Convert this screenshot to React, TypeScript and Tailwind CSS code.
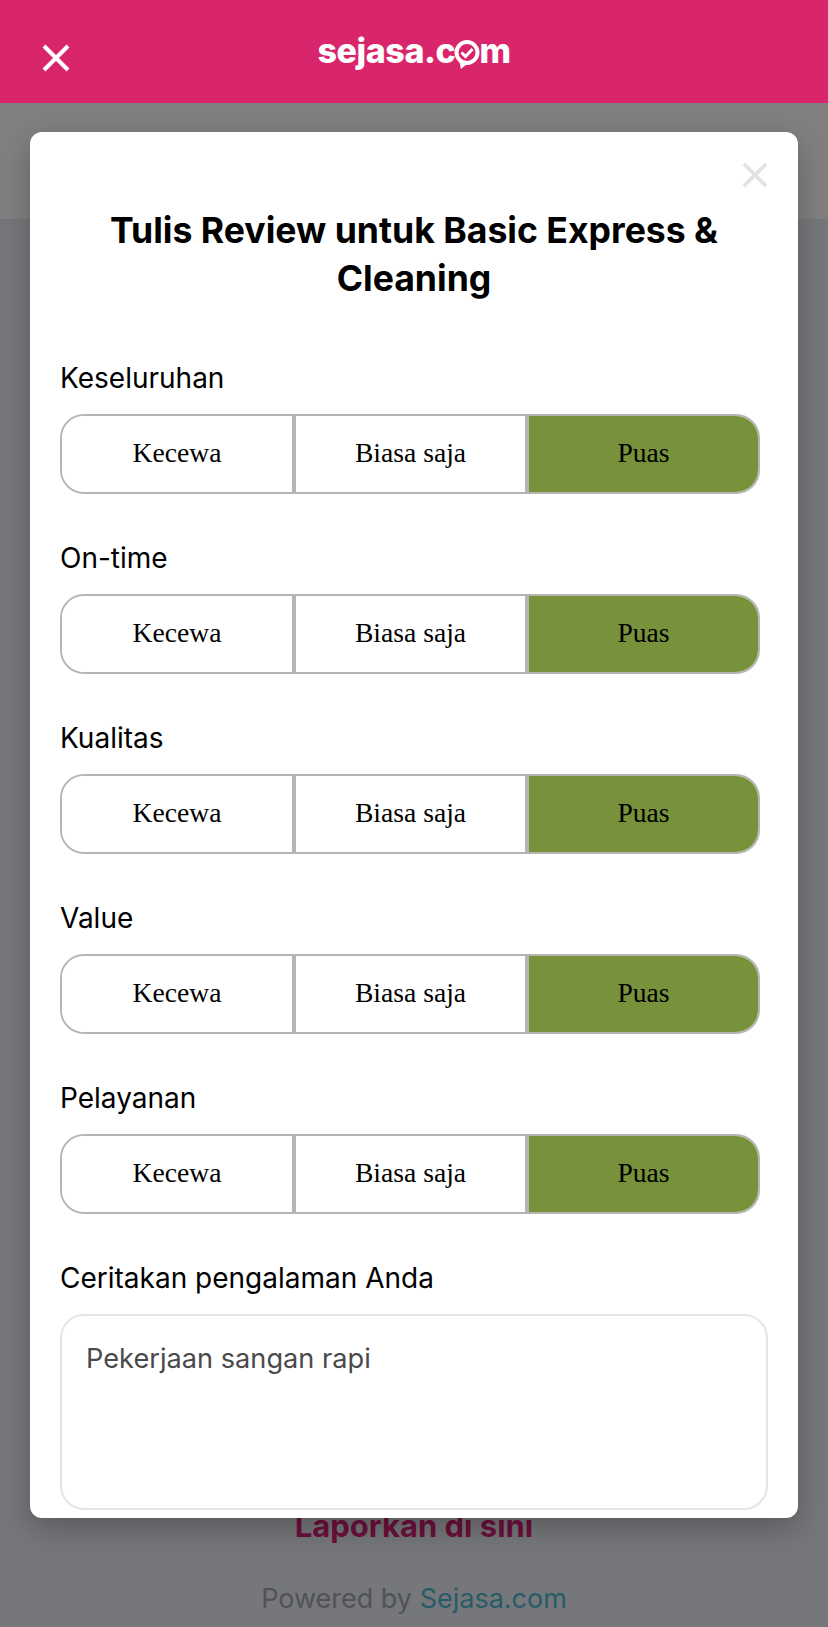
import React from 'react';

const font = { franklin: 'font-["Inter","Liberation_Sans",sans-serif]' };

const ratings = ['Keseluruhan', 'On-time', 'Kualitas', 'Value', 'Pelayanan'];

function CloseIcon({ className }: { className: string }) {
  return (
    <svg viewBox="0 0 28 28" className={className} fill="none" stroke="currentColor" strokeWidth="4" strokeLinecap="butt">
      <path d="M2 2 26 26M26 2 2 26" />
    </svg>
  );
}

function LogoMark() {
  return (
    <svg viewBox="0 0 26 30" className="w-[26px] h-[30px] mt-[9px] -mx-[1px]" fill="none">
      <circle cx="13" cy="12.5" r="10.5" stroke="white" strokeWidth="4" />
      <path d="M5 20l2 9 7-6Z" fill="white" />
      <path d="M7.5 12.5l4 4 7-7.5" stroke="white" strokeWidth="3" />
    </svg>
  );
}

function RatingRow({ label }: { label: string }) {
  return (
    <div className="mb-[46px]">
      <div className="text-[28px] leading-[36px] text-black mb-[18px]">{label}</div>
      <div className="flex h-[80px] w-[700px] rounded-[24px] border-2 border-[#b5b5b5] overflow-hidden font-['Liberation_Serif',serif] text-[27.6px] text-black">
        <div className="w-[234px] flex items-center justify-center pb-[2px] border-r-4 border-[#b5b5b5] bg-white">Kecewa</div>
        <div className="w-[233px] flex items-center justify-center pb-[2px] border-r-4 border-[#b5b5b5] bg-white">Biasa saja</div>
        <div className="flex-1 flex items-center justify-center pb-[2px] bg-[#78913b]">Puas</div>
      </div>
    </div>
  );
}

export default function App() {
  return (
    <div className={`relative h-[1627px] w-[828px] overflow-hidden bg-[#76777a] ${font.franklin}`}>
      {/* Top bar */}
      <header className="relative z-20 h-[103px] bg-[#d9256c] flex items-center justify-center">
        <button className="absolute left-[42px] top-[44px] text-white">
          <CloseIcon className="w-[28px] h-[28px]" />
        </button>
        <div className="flex items-center h-[60px] mt-[2px] pb-[4px] text-white font-extrabold text-[34px] leading-none tracking-[-0.4px]">
          <span>sejasa.c</span>
          <LogoMark />
          <span>m</span>
        </div>
      </header>

      {/* Page behind the overlay */}
      <div className="h-[116px] bg-[#808080]" />
      <div className="flex flex-col items-center pt-[1287px]">
        <div className="text-[#6d0f3d] font-bold text-[31px] leading-[40px]">Laporkan di sini</div>
        <div className="mt-[35px] text-[27px] leading-[36px] text-[#505256]">
          Powered by <span className="text-[#265c68]">Sejasa.com</span>
        </div>
      </div>

      {/* Modal */}
      <div className="absolute left-[30px] top-[132px] z-10 w-[768px] h-[1386px] rounded-[12px] bg-white overflow-hidden shadow-[0_10px_30px_rgba(0,0,0,0.25)]">
        <div className="absolute right-[30px] top-[30px] text-[#e3e3e3]">
          <CloseIcon className="w-[26px] h-[26px]" />
        </div>
        <div className="px-[30px] pt-[75px]">
          <h1 className="text-center font-bold text-[35.6px] leading-[48px] text-black mb-[57px] px-[20px]">
            Tulis Review untuk Basic Express &amp; Cleaning
          </h1>
          {ratings.map((r) => (
            <RatingRow key={r} label={r} />
          ))}
          <div className="text-[28px] leading-[36px] text-black mb-[18px] mt-[23px]">Ceritakan pengalaman Anda</div>
          <div className="h-[196px] w-[708px] rounded-[24px] border-2 border-[#e5e5e5] px-[24px] py-[25px] text-[27.2px] leading-[36px] text-[#4a4a4a]">
            Pekerjaan sangan rapi
          </div>
        </div>
      </div>
    </div>
  );
}
